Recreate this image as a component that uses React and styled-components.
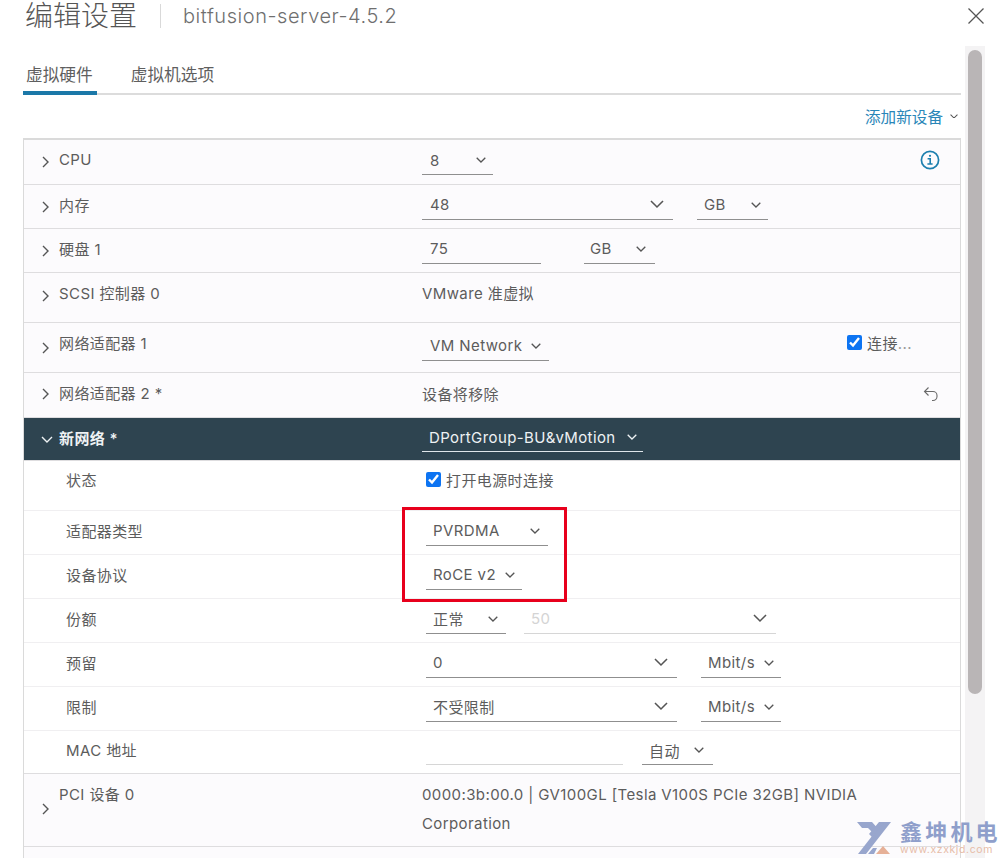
import React from "react";
import styled, { createGlobalStyle } from "styled-components";

const Global = createGlobalStyle`
  html, body { margin: 0; padding: 0; background: #fff; }
  * { box-sizing: border-box; }
`;

const FONT = `Inter, "Noto Sans CJK SC", "Noto Sans", sans-serif`;

const Page = styled.div`
  position: relative;
  width: 1000px;
  height: 858px;
  overflow: hidden;
  background: #fff;
  font-family: ${FONT};
  font-size: 15px;
  color: #5c5c5c;
`;

const Header = styled.header`
  display: flex;
  align-items: center;
  height: 46px;
  padding: 0 16px 14px 25px;
`;
const Title = styled.h1`
  margin: 0;
  font-size: 28px;
  line-height: 32px;
  font-weight: 300;
  color: #555;
`;
const Sep = styled.span`
  width: 1px;
  height: 24px;
  margin: 0 22px 0 23px;
  background: #d9d9d9;
`;
const Sub = styled.span`
  font-size: 20px;
  font-weight: 300;
  letter-spacing: 0.55px;
  color: #6f6f6f;
`;
const Close = styled.button`
  display: flex;
  margin-left: auto;
  padding: 0;
  border: 0;
  background: none;
  color: #555;
`;

const Body = styled.div`
  display: flex;
  padding-left: 23px;
`;
const Content = styled.main`
  flex: 0 0 938px;
`;
const Track = styled.div`
  flex: 0 0 20px;
  height: 812px;
  margin-left: 4px;
  padding: 4px 3px;
  background: #f4f3f4;
`;
const Thumb = styled.div`
  height: 644px;
  border-radius: 7px;
  background: #b9b5b6;
`;

const Tabs = styled.nav`
  display: flex;
  gap: 34px;
  height: 49px;
  border-bottom: 2px solid #dcdcdc;
`;
const Tab = styled.a`
  display: flex;
  align-items: center;
  height: 49px;
  padding: 10px ${p => (p.$active ? "4px" : "0")} 0 ${p => (p.$active ? "3px" : "0")};
  font-size: 16.7px;
  color: #5f5f5f;
  border-bottom: 4px solid ${p => (p.$active ? "#1b78a8" : "transparent")};
`;

const AddBar = styled.div`
  display: flex;
  justify-content: flex-end;
  align-items: center;
  gap: 7px;
  height: 43px;
  padding: 0 3px 1px 0;
  font-size: 15.6px;
  color: #2a86b8;
`;

const Table = styled.section`
  border: 1px solid #dadada;
  border-width: 2px 1px 0 1px;
`;
const Row = styled.div`
  display: grid;
  grid-template-columns: 398px 1fr;
  align-items: center;
  height: ${p => p.$h}px;
  padding-bottom: ${p => p.$pb || 0}px;
  border-bottom: 1px solid ${p => (p.$sub && !p.$strong ? "#f0eff1" : "#dedddf")};
  background: ${p => (p.$dark ? "#2e4450" : p.$sub ? "#fff" : "#fcfbfd")};
  color: ${p => (p.$dark ? "#eef2f4" : "inherit")};
`;
const PciRow = styled(Row)`
  align-items: start;
  padding-top: 6px;
`;
const Label = styled.div`
  display: flex;
  align-items: center;
  gap: ${p => (p.$dark ? 6 : 10)}px;
  padding-left: ${p => (p.$sub ? "42px" : p.$dark ? "17px" : "18px")};
  letter-spacing: 0.4px;
  font-weight: ${p => (p.$dark ? 600 : 400)};
`;
const LabelText = styled.span`
  margin-bottom: ${p => p.$lift || 0}px;
`;
const PciLabel = styled(Label)`
  align-items: flex-start;
  height: 58px;
`;
const PciChevron = styled.span`
  display: flex;
  align-self: center;
`;
const PciText = styled.span`
  line-height: 29px;
`;
const Value = styled.div`
  display: flex;
  align-items: center;
  gap: ${p => p.$gap || 24}px;
  padding-left: ${p => (p.$sub ? "4px" : "0")};
  padding-right: 20px;
  padding-bottom: ${p => p.$lift || 0}px;
  letter-spacing: 0.4px;
`;
const PciValue = styled(Value)`
  max-width: 470px;
`;
const Select = styled.div`
  display: flex;
  justify-content: space-between;
  align-items: center;
  flex: 0 0 ${p => p.$w}px;
  height: 26px;
  padding: 0 ${p => p.$pr || 8}px 3px ${p => p.$pl || 8}px;
  border-bottom: 1px solid ${p => (p.$dark ? "#dfe6ea" : p.$faint ? "#d6d6d6" : "#8f8f8f")};
  color: ${p => (p.$faint ? "#d4d4d4" : p.$dark ? "#eef2f4" : "#5c5c5c")};
`;
const Arrow = styled.svg`
  flex: none;
  color: ${p => (p.$dark ? "#eef2f4" : "#555")};
`;
const Trailing = styled.div`
  display: flex;
  align-items: center;
  gap: 5px;
  margin-left: auto;
  margin-right: ${p => p.$mr || 0}px;
  margin-bottom: ${p => p.$mb || 0}px;
`;
const Check = styled.input`
  flex: none;
  width: 15px;
  height: 15px;
  margin: 0;
  accent-color: #0d74f2;
`;
const Inline = styled.label`
  display: flex;
  align-items: center;
  gap: 5px;
`;
const PlainText = styled.span``;
const Ellipsis = styled.span`
  color: #9a9a9a;
`;
const Tail = styled.div`
  height: 12px;
  background: #fcfbfd;
`;

const RedBox = styled.div`
  position: absolute;
  left: 402px;
  top: 507px;
  width: 165px;
  height: 95px;
  border: 3px solid #e8001c;
`;
const Watermark = styled.div`
  position: absolute;
  left: 857px;
  top: 820px;
  display: flex;
  gap: 9px;
`;
const Brand = styled.div`
  display: flex;
  flex-direction: column;
`;
const BrandName = styled.span`
  font-size: 22px;
  line-height: 24px;
  font-weight: 700;
  letter-spacing: 3.2px;
  white-space: nowrap;
  color: #8f9fcb;
`;
const BrandUrl = styled.span`
  font-size: 10.5px;
  line-height: 12px;
  letter-spacing: 0.6px;
  white-space: nowrap;
  color: #e7bca8;
`;

const Down = ({ s = 10, dark }) => (
  <Arrow $dark={dark} width={s} height={s * 0.6} viewBox="0 0 10 6" fill="none" stroke="currentColor" strokeWidth={s > 11 ? 1.1 : 1.3}>
    <path d="M.7.7 5 5 9.3.7" />
  </Arrow>
);
const Right = () => (
  <svg width="7" height="12" viewBox="0 0 7 12" fill="none" stroke="#555" strokeWidth="1.4">
    <path d="M1 1l5 5-5 5" />
  </svg>
);
const Open = () => (
  <svg width="12" height="7" viewBox="0 0 12 7" fill="none" stroke="#eef2f4" strokeWidth="1.4">
    <path d="M1 1l5 5 5-5" />
  </svg>
);
const X = () => (
  <svg width="16" height="16" viewBox="0 0 16 16" stroke="currentColor" strokeWidth="1.25">
    <path d="M.5.5l15 15M15.500.5l-15 15" />
  </svg>
);
const Info = () => (
  <svg width="20" height="20" viewBox="0 0 20 20" fill="none" stroke="#1d7fae" strokeWidth="1.7">
    <circle cx="10" cy="10" r="8.6" />
    <path d="M7.6 8.700h2.600v5.200M7.400 14h5.200" strokeWidth="1.6" />
    <circle cx="10" cy="5.800" r="1.1" fill="#1d7fae" stroke="none" />
  </svg>
);
const Undo = () => (
  <svg width="16" height="16" viewBox="0 0 16 16" fill="none" stroke="#6a6a6a" strokeWidth="1.1">
    <path d="M5.500 1.500 1.500 5.500l4 4M1.500 5.500h8.500a4 4 0 0 1 4 4v1a4 4 0 0 1-4 4H9" />
  </svg>
);
const Logo = () => (
  <svg width="34" height="35" viewBox="0 0 34 35">
    <path d="M0 2h15l8 9-4 5-8-8H5zM34 2 9 34H1L26 2z" fill="#98a6cd" />
    <path d="M22 2h5L15 17l-3-3zM11 34l5-6h4l-3 6z" fill="#98a6cd" />
    <path d="M19 34l7-8 7 8z" fill="#e6b097" />
  </svg>
);

const Sel = ({ children, w, pl, pr, s, dark, faint }) => (
  <Select $w={w} $pl={pl} $pr={pr} $dark={dark} $faint={faint}>
    <PlainText>{children}</PlainText>
    <Down s={s} dark={dark} />
  </Select>
);
const Input = ({ children, w, pl, faint }) => (
  <Select $w={w} $pl={pl} $faint={faint}>
    <PlainText>{children}</PlainText>
  </Select>
);

export default function App() {
  return (
    <Page>
      <Global />
      <Header>
        <Title>编辑设置</Title>
        <Sep />
        <Sub>bitfusion-server-4.5.2</Sub>
        <Close aria-label="关闭"><X /></Close>
      </Header>
      <Body>
        <Content>
          <Tabs>
            <Tab $active>虚拟硬件</Tab>
            <Tab>虚拟机选项</Tab>
          </Tabs>
          <AddBar>添加新设备 <Down s={8} /></AddBar>
          <Table>
            <Row $h={45}>
              <Label><Right /><LabelText $lift={5}>CPU</LabelText></Label>
              <Value>
                <Sel w={71} pr={7}>8</Sel>
                <Trailing $mb={5}><Info /></Trailing>
              </Value>
            </Row>
            <Row $h={44}>
              <Label><Right /><LabelText $lift={4}>内存</LabelText></Label>
              <Value>
                <Sel w={251} s={14} pr={9}>48</Sel>
                <Sel w={71} pl={7} pr={7}>GB</Sel>
              </Value>
            </Row>
            <Row $h={44}>
              <Label><Right /><LabelText $lift={4}>硬盘 1</LabelText></Label>
              <Value $gap={43}>
                <Input w={119}>75</Input>
                <Sel w={71} pl={6} pr={9}>GB</Sel>
              </Value>
            </Row>
            <Row $h={50} $pb={4}>
              <Label><Right /><LabelText $lift={6}>SCSI 控制器 0</LabelText></Label>
              <Value $lift={6}>VMware 准虚拟</Value>
            </Row>
            <Row $h={50}>
              <Label><Right /><LabelText $lift={11}>网络适配器 1</LabelText></Label>
              <Value>
                <Sel w={127} pr={8}>VM Network</Sel>
                <Trailing $mr={28} $mb={10}>
                  <Check type="checkbox" defaultChecked />
                  <PlainText>连接<Ellipsis>...</Ellipsis></PlainText>
                </Trailing>
              </Value>
            </Row>
            <Row $h={45} $pb={2}>
              <Label><Right /><LabelText $lift={3}>网络适配器 2 *</LabelText></Label>
              <Value $lift={1}>设备将移除<Trailing $mr={1}><Undo /></Trailing></Value>
            </Row>
            <Row $h={43} $dark>
              <Label $dark><Open /><LabelText $lift={4}>新网络 *</LabelText></Label>
              <Value><Sel w={221} pl={7} pr={6} dark>DPortGroup-BU&amp;vMotion</Sel></Value>
            </Row>
            <Row $h={50} $sub $pb={12}>
              <Label $sub>状态</Label>
              <Value $sub>
                <Inline><Check type="checkbox" defaultChecked />打开电源时连接</Inline>
              </Value>
            </Row>
            <Row $h={44} $sub>
              <Label $sub><LabelText $lift={5}>适配器类型</LabelText></Label>
              <Value $sub><Sel w={122} pl={7} pr={8}>PVRDMA</Sel></Value>
            </Row>
            <Row $h={44} $sub>
              <Label $sub><LabelText $lift={5}>设备协议</LabelText></Label>
              <Value $sub><Sel w={96} pl={7} pr={7}>RoCE v2</Sel></Value>
            </Row>
            <Row $h={44} $sub>
              <Label $sub><LabelText $lift={5}>份额</LabelText></Label>
              <Value $sub $gap={18}>
                <Sel w={80} pl={7} pr={8}>正常</Sel>
                <Sel w={252} pl={7} pr={9} s={14} faint>50</Sel>
              </Value>
            </Row>
            <Row $h={44} $sub>
              <Label $sub><LabelText $lift={5}>预留</LabelText></Label>
              <Value $sub>
                <Sel w={251} s={14} pl={7} pr={9}>0</Sel>
                <Sel w={80} pl={7} pr={7}>Mbit/s</Sel>
              </Value>
            </Row>
            <Row $h={44} $sub>
              <Label $sub><LabelText $lift={5}>限制</LabelText></Label>
              <Value $sub>
                <Sel w={251} s={14} pl={7} pr={9}>不受限制</Sel>
                <Sel w={80} pl={7} pr={7}>Mbit/s</Sel>
              </Value>
            </Row>
            <Row $h={43} $sub $strong>
              <Label $sub><LabelText $lift={5}>MAC 地址</LabelText></Label>
              <Value $sub $gap={19}>
                <Input w={197} faint />
                <Sel w={71} pl={7} pr={9}>自动</Sel>
              </Value>
            </Row>
            <PciRow $h={73}>
              <PciLabel>
                <PciChevron><Right /></PciChevron>
                <PciText>PCI 设备 0</PciText>
              </PciLabel>
              <PciValue><PciText>0000:3b:00.0 | GV100GL [Tesla V100S PCIe 32GB] NVIDIA Corporation</PciText></PciValue>
            </PciRow>
            <Tail />
          </Table>
        </Content>
        <Track><Thumb /></Track>
      </Body>
      <RedBox />
      <Watermark>
        <Logo />
        <Brand>
          <BrandName>鑫坤机电</BrandName>
          <BrandUrl>www.xzxkjd.com</BrandUrl>
        </Brand>
      </Watermark>
    </Page>
  );
}
